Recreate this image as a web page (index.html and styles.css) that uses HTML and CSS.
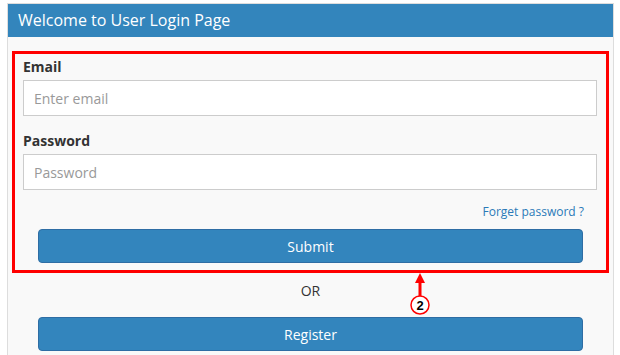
FILE: index.html
```html
<!DOCTYPE html>
<html lang="en">
  <head>
    <meta charset="UTF-8" />
    <meta name="viewport" content="width=device-width, initial-scale=1.0" />
    <title>User Login</title>
    <link rel="stylesheet" href="styles.css">
  </head>
  <body>
    <div class="page">
      <div class="panel">
        <div class="panel-heading">Welcome to User Login Page</div>
        <div class="panel-body">
          <form class="login-form">
            <div class="form-group">
              <label class="form-label">Email</label>
              <input class="form-input" type="email" placeholder="Enter email">
            </div>
            <div class="form-group form-group-next">
              <label class="form-label">Password</label>
              <input class="form-input" type="password" placeholder="Password">
            </div>
            <div class="forget-row">
              <a class="forget-link" href="#">Forget password ?</a>
            </div>
            <button class="btn btn-submit" type="button">Submit</button>
          </form>
          <div class="after-form">
            <div class="or-text">OR</div>
            <button class="btn" type="button">Register</button>
          </div>
        </div>
      </div>

      <svg class="callout" width="24" height="46" viewBox="0 0 24 46">
        <polygon points="12,1 7,11 17,11" fill="#ff0000" />
        <rect x="10.5" y="9" width="3" height="15" fill="#ff0000" />
        <circle cx="12" cy="33" r="9" fill="#ffffff" stroke="#ff0000" stroke-width="1.5" />
        <text x="12" y="38" text-anchor="middle" class="callout-num">2</text>
      </svg>
    </div>
  </body>
</html>
```

FILE: styles.css
```css
* {
  margin: 0;
  padding: 0;
  box-sizing: border-box;
}

body {
  font-family: "Open Sans", "Liberation Sans", sans-serif;
  color: #333;
  background-color: #fff;
}

.page {
  position: relative;
  padding: 3px 0 0 7px;
}

.panel {
  width: 607px;
  height: 360px;
  border: 1px solid #ddd;
  background-color: #f9f9f9;
}

.panel-heading {
  height: 33px;
  line-height: 33px;
  padding: 0 10px;
  font-size: 16px;
  color: #fff;
  background-color: #3385bc;
}

.panel-body {
  padding: 14px 4px 0;
}

.login-form {
  border: 3px solid #ff0000;
  padding: 3px 9px 7px 8px;
}

.form-label {
  display: block;
  line-height: 20px;
  margin-bottom: 3px;
  font-size: 14px;
  font-weight: 700;
  color: #333;
}

.form-group-next {
  margin-top: 15px;
}

.form-input {
  display: block;
  width: 100%;
  height: 36px;
  padding: 0 10px;
  border: 1px solid #ccc;
  background-color: #fff;
  font-family: inherit;
  font-size: 14px;
  color: #555;
}

.form-input::placeholder {
  color: #999;
}

.forget-row {
  margin-top: 10px;
  padding-right: 13px;
  line-height: 20px;
  text-align: right;
}

.forget-link {
  font-size: 12px;
  color: #2a7ab8;
  text-decoration: none;
}

.btn {
  display: block;
  width: 100%;
  height: 34px;
  border: 1px solid #2e6da4;
  border-radius: 4px;
  background-color: #3385bd;
  font-family: inherit;
  font-size: 14px;
  color: #fff;
  cursor: pointer;
}

.btn-submit {
  margin: 7px 14px 0 15px;
  width: calc(100% - 29px);
}

.after-form {
  padding: 0 26px;
}

.or-text {
  margin-top: 8px;
  line-height: 20px;
  font-size: 14px;
  text-align: center;
}

.after-form .btn {
  margin-top: 16px;
}

.callout {
  position: absolute;
  left: 408px;
  top: 272px;
}

.callout-num {
  font-family: "Liberation Sans", sans-serif;
  font-size: 13px;
  font-weight: 700;
  fill: #000;
}
```
